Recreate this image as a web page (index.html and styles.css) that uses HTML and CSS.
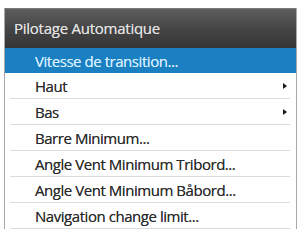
FILE: index.html
```html
<!DOCTYPE html>
<html>
<head>
<meta charset="utf-8">
<link rel="stylesheet" href="styles.css">
</head>
<body>
<div class="panel">
  <div class="header">Pilotage Automatique</div>
  <ul class="menu">
    <li class="item selected"><span class="label">Vitesse de transition...</span></li>
    <li class="item"><span class="label">Haut</span><span class="arrow"></span></li>
    <li class="item"><span class="label">Bas</span><span class="arrow"></span></li>
    <li class="item"><span class="label">Barre Minimum...</span></li>
    <li class="item"><span class="label">Angle Vent Minimum Tribord...</span></li>
    <li class="item"><span class="label">Angle Vent Minimum Båbord...</span></li>
    <li class="item"><span class="label">Navigation change limit...</span></li>
  </ul>
</div>
</body>
</html>
```
FILE: styles.css
```css
html, body {
  margin: 0;
  padding: 0;
  background: #ffffff;
  overflow: hidden;
}
body {
  font-family: "Open Sans", "DejaVu Sans", sans-serif;
  width: 301px;
  height: 229px;
}
.panel {
  margin: 8px 0 0 4px;
  width: 293px;
  box-sizing: border-box;
  border-left: 1px solid #a8a8a8;
  border-right: 1px solid #a8a8a8;
  background: #ffffff;
}
.header {
  height: 40px;
  box-sizing: border-box;
  border-top: 1px solid #7a7a7a;
  background: linear-gradient(#5e5e5e, #434343 55%, #363636);
  color: #e2e2e2;
  font-size: 15px;
  line-height: 39px;
  padding-left: 9px;
  letter-spacing: -0.25px;
  text-shadow: 0 0 0.6px rgba(226, 226, 226, 0.8);
}
.menu {
  list-style: none;
  margin: 0;
  padding: 0;
}
.item {
  position: relative;
  display: flex;
  align-items: center;
  justify-content: space-between;
  height: 26px;
  box-sizing: border-box;
  padding: 0 9px 0 30px;
  color: #2a2a2a;
  font-size: 15px;
  letter-spacing: -0.45px;
  text-shadow: 0 0 0.6px rgba(40, 40, 40, 0.7);
}
.item::after {
  content: "";
  position: absolute;
  left: 5px;
  right: 6px;
  bottom: 0;
  height: 1px;
  background: #dcdcdc;
}
.item.selected {
  height: 25px;
  background: #1a80c2;
  color: #d8efff;
  text-shadow: 0 0 0.6px rgba(216, 239, 255, 0.8);
}
.item.selected::after {
  display: none;
}
.arrow {
  width: 0;
  height: 0;
  border-top: 3px solid transparent;
  border-bottom: 3px solid transparent;
  border-left: 4px solid #1a1a1a;
}
```
